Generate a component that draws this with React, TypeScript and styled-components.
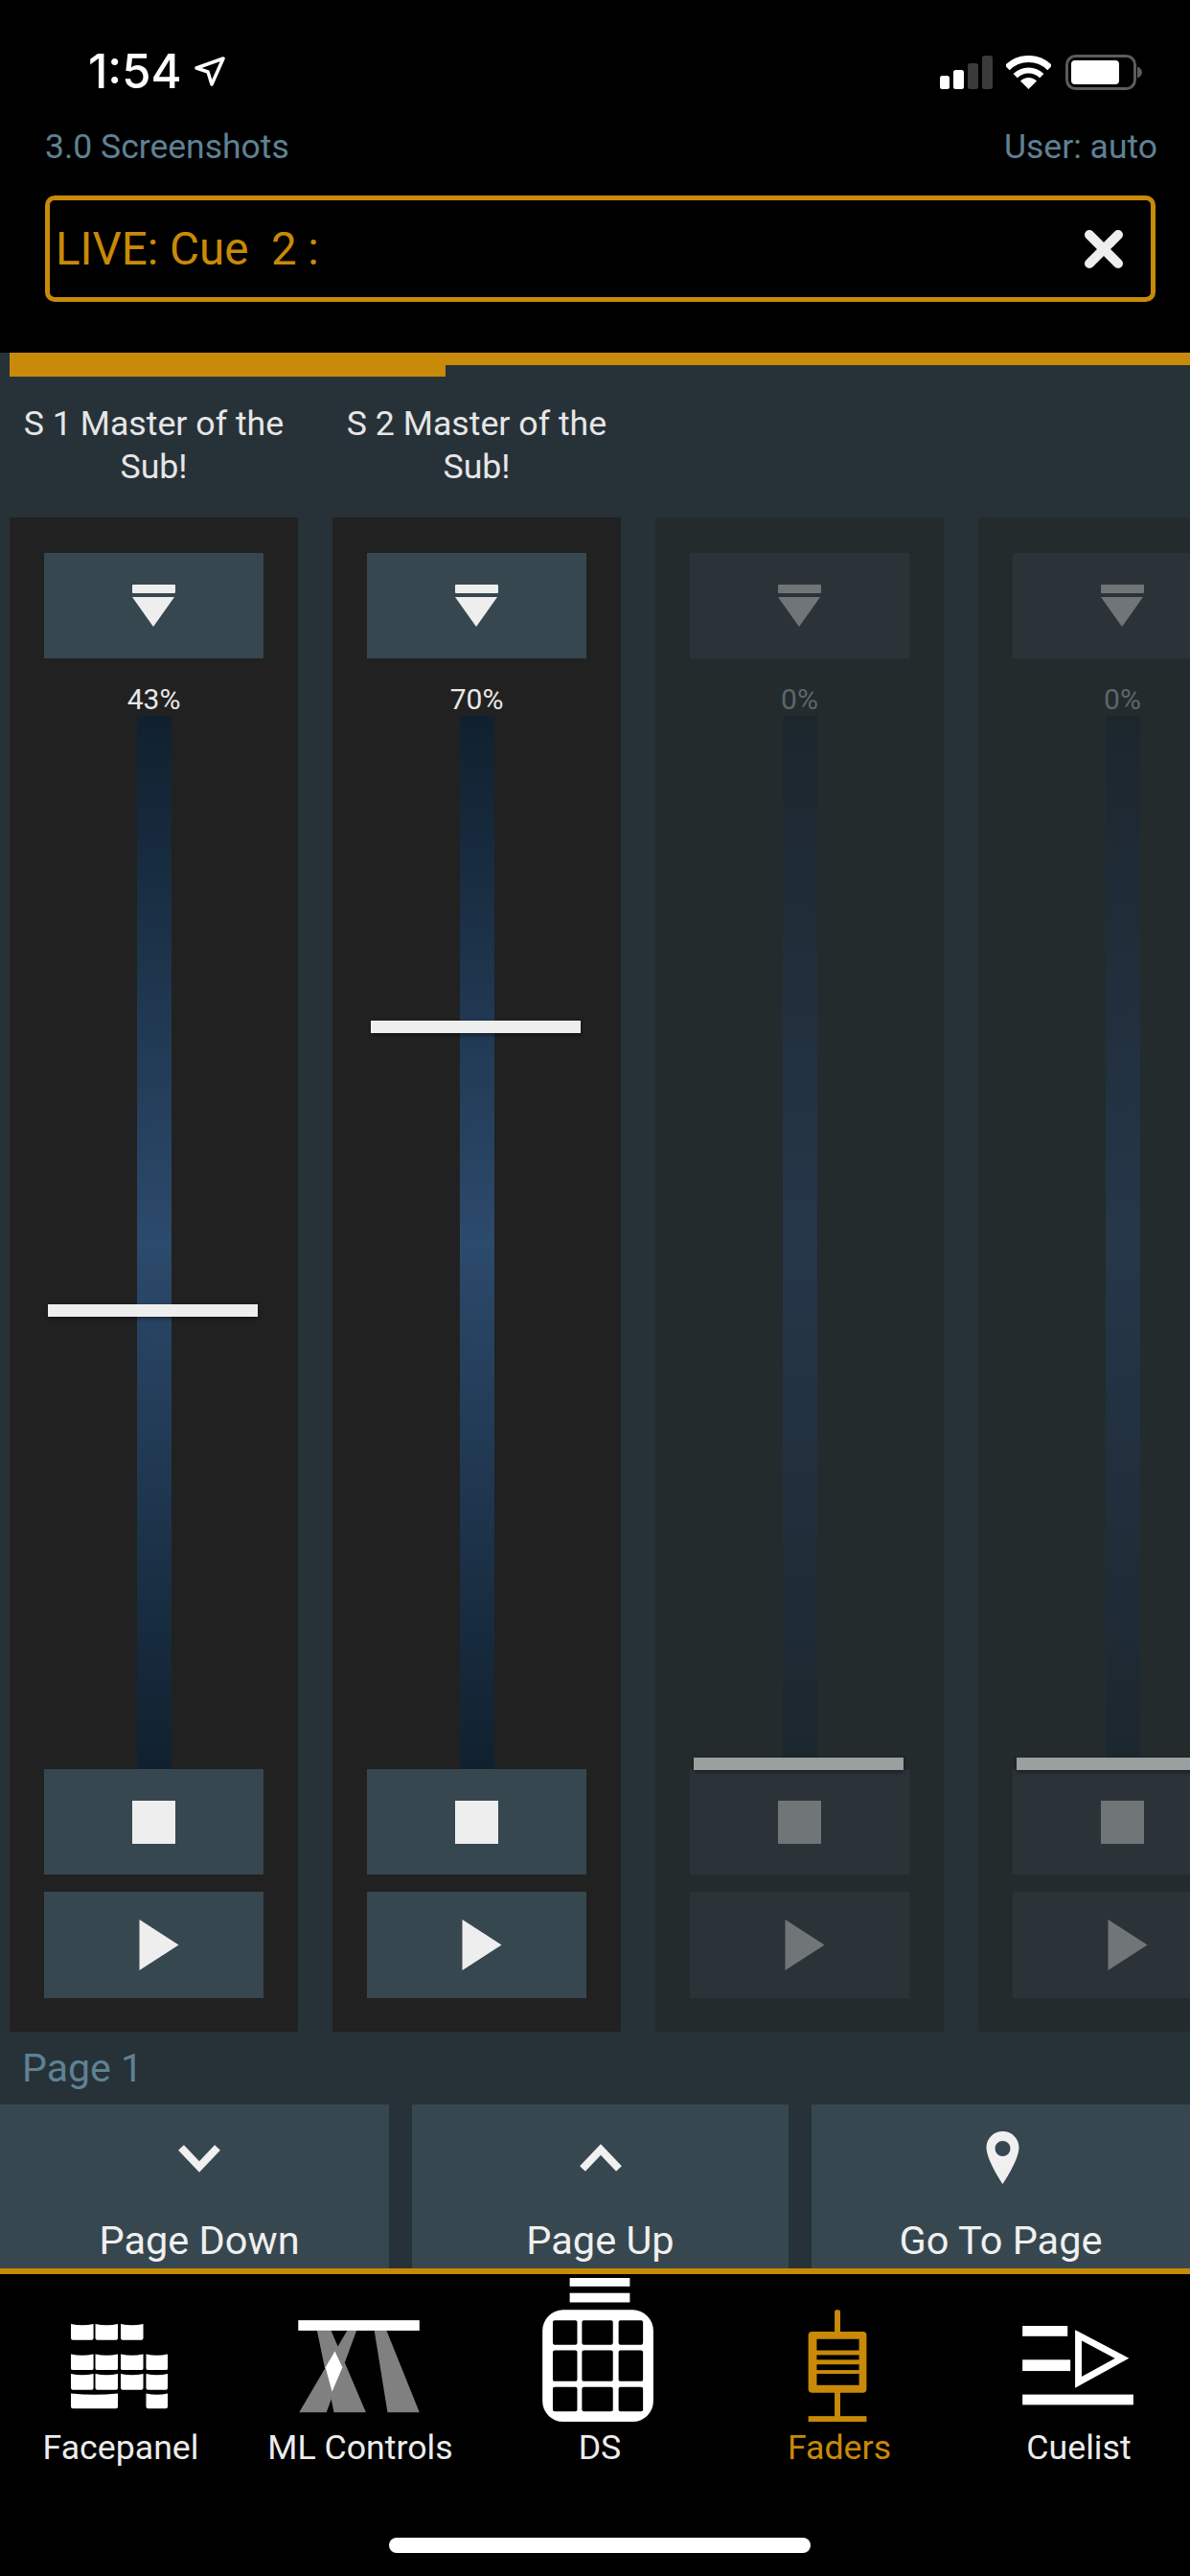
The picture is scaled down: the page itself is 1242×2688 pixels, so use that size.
import React from 'react';
import styled, { createGlobalStyle } from 'styled-components';

const ORANGE = '#c88a08';
const Global = createGlobalStyle`
  html, body { margin: 0; padding: 0; background: #000; }
  body { font-family: Roboto, "Liberation Sans", sans-serif; }
`;
const Page = styled.div`
  width: 1242px; height: 2688px; background: #000; overflow: hidden;
  display: flex; flex-direction: column;
`;
const StatusBar = styled.div`
  height: 50px; padding: 50px 50px 32px 92px; display: flex; align-items: center;
`;
const Time = styled.span`
  font-family: Inter, Roboto, sans-serif; font-weight: 500; font-size: 49px; color: #fff; line-height: 50px;
`;
const Arrow = styled.svg` margin-left: 13px; `;
const Spacer = styled.div` flex: 1; `;
const StatusIcons = styled.div` display: flex; align-items: center; gap: 14px; `;
const HeaderRow = styled.div`
  padding: 0 34px 0 47px; display: flex; justify-content: space-between;
  font-size: 35.5px; line-height: 42px; color: #5f8194;
`;
const CueBox = styled.div`
  margin: 30px 36px 53px 47px; height: 101px; border: 5px solid ${ORANGE}; border-radius: 10px;
  display: flex; align-items: center; justify-content: space-between; padding: 0 28px 0 6px;
`;
const CueText = styled.span` font-size: 47.5px; color: ${ORANGE}; white-space: pre; `;
const Panel = styled.div` flex: 1; background: #263238; display: flex; flex-direction: column; min-height: 0; `;
const ProgressTrack = styled.div` margin-left: 10px; height: 13px; background: ${ORANGE}; flex-shrink: 0; `;
const ProgressFill = styled.div` width: 455px; height: 25px; background: ${ORANGE}; `;
const Strip = styled.div`
  display: flex; gap: 36px; padding: 39px 0 0 10px; flex-shrink: 0;
`;
const Channel = styled.div` width: 301px; flex-shrink: 0; display: flex; flex-direction: column; `;
const ChannelName = styled.div`
  height: 120px; text-align: center; font-size: 35.7px; line-height: 45px; color: #e6e6e6; white-space: pre-line;
`;
const Fader = styled.div<{ $dim?: boolean }>`
  position: relative; height: 1580px; box-sizing: border-box; padding: 37px 36px 35px;
  background: ${p => (p.$dim ? '#232b2d' : '#212121')};
  display: flex; flex-direction: column;
  color: ${p => (p.$dim ? '#707678' : '#eeeeee')};
`;
const FaderButton = styled.div<{ $dim?: boolean; $h?: number }>`
  height: ${p => p.$h ?? 110}px; flex-shrink: 0; background: ${p => (p.$dim ? '#2b3339' : '#37474f')};
  display: flex; align-items: center; justify-content: center;
`;
const Percent = styled.div<{ $dim?: boolean }>`
  height: 34px; padding-top: 26px; text-align: center; font-size: 30px; line-height: 34px; flex-shrink: 0;
  color: ${p => (p.$dim ? '#5e666a' : '#e8e8e8')};
`;
const Track = styled.div<{ $dim?: boolean }>`
  flex: 1; width: 36px; align-self: center;
  background: ${p => p.$dim
    ? 'linear-gradient(to bottom, #1c262d 0%, #26374a 50%, #1c262d 100%)'
    : 'linear-gradient(to bottom, #10202e 0%, #2c4a6c 50%, #10202e 100%)'};
`;
const Handle = styled.div<{ $dim?: boolean }>`
  position: absolute; left: 40px; width: 219px; height: 13px;
  background: ${p => (p.$dim ? '#9b9fa0' : '#eeeeee')};
  box-shadow: 0 2px 4px rgba(0,0,0,.45);
`;
const ButtonGap = styled.div` height: 18px; flex-shrink: 0; `;
const PageLabel = styled.div`
  height: 76px; box-sizing: border-box; padding: 16px 0 0 23px; font-size: 41px; line-height: 44px; color: #5f8194; flex-shrink: 0;
`;
const ActionRow = styled.div`
  display: grid; grid-template-columns: 406px 393px 1fr; column-gap: 24px; height: 171px; flex-shrink: 0;
`;
const ActionButton = styled.div<{ $shift?: number }>`
  background: #37474f; color: #f0f0f0; display: flex; flex-direction: column; align-items: center;
  padding-left: ${p => p.$shift ?? 0}px;
`;
const ActionIcon = styled.svg` margin-top: 24px; height: 64px; `;
const ActionText = styled.div` margin-top: 29px; font-size: 41.5px; line-height: 49px; `;
const Rule = styled.div` height: 6px; background: ${ORANGE}; flex-shrink: 0; `;
const Nav = styled.div`
  height: 315px; box-sizing: border-box; background: #000; padding: 4px 0 0 1px;
  display: grid; grid-template-columns: repeat(5, 250px); grid-template-rows: 198px; flex-shrink: 0; position: relative;
`;
const NavItem = styled.div<{ $active?: boolean }>`
  display: flex; flex-direction: column; align-items: center; color: ${p => (p.$active ? ORANGE : '#ececec')};
`;
const NavLabel = styled.div` margin-top: 5px; font-size: 35.7px; line-height: 41px; `;
const HomeBar = styled.div` position: absolute; left: 406px; top: 275px; width: 440px; height: 16px; border-radius: 8px; background: #fff; `;

const icon = (x: number, children: React.ReactNode) => (
  <svg width="160" height="155" viewBox={`${x} 2377 160 155`} style={{ display: 'block' }}>{children}</svg>
);

const KeyCap = ({ x, y, w, h }: { x: number; y: number; w: number; h: number }) => (
  <path d={`M${x} ${y + 1}Q${x + w / 2} ${y + 3.5} ${x + w} ${y + 1}V${y + h - 2}Q${x + w} ${y + h} ${x + w - 2} ${y + h}H${x + 2}Q${x} ${y + h} ${x} ${y + h - 2}Z`} />
);

const fpRows = [2425, 2457, 2478];
const fpCols: [number, number][] = [[73, 24], [99, 24], [126, 24], [153, 23]];

const FacepanelIcon = () => icon(46, <g fill="#fff">
  {fpRows.map((y, r) => fpCols.slice(0, r === 0 ? 3 : 4).map(([x, w]) => <KeyCap key={`${y}-${x}`} x={x} y={y} w={w} h={18} />))}
  <KeyCap x={73} y={2499} w={50} h={17} />
  <KeyCap x={153} y={2499} w={23} h={17} />
</g>);

const MLIcon = () => icon(296, <>
  <g fill="#808080">
    <polygon points="330,2433 345,2433 382,2520 348,2520" />
    <polygon points="362,2433 372,2433 340,2520 311,2520" />
    <polygon points="391,2433 404,2433 439,2520 405,2520" />
  </g>
  <polygon points="349,2455 357,2472 346,2498 339,2472" fill="#fff" />
  <rect x="310" y="2422" width="129" height="11" fill="#fff" />
</>);

const dsCols: [number, number][] = [[577, 26], [608, 33], [647, 26]];
const dsRows: [number, number][] = [[2422, 26], [2454, 33], [2493, 26]];
const DSIcon = () => icon(547, <>
  <rect x="595" y="2377" width="64" height="9" fill="#fff" />
  <rect x="595" y="2393" width="64" height="10" fill="#fff" />
  <rect x="566" y="2411" width="118" height="119" rx="22" fill="#fff" />
  {dsRows.map(([y, h]) => dsCols.map(([x, w]) => <rect key={`${x}-${y}`} x={x} y={y} width={w} height={h} rx="2" fill="#000" />))}
</>);

const FadersIcon = () => icon(796, <g fill={ORANGE}>
  <rect x="871" y="2411" width="6" height="114" rx="2" />
  <rect x="843" y="2434" width="62" height="65" rx="4" />
  <rect x="843" y="2524" width="62" height="6" />
  <g fill="#000">
    <rect x="852" y="2442" width="45" height="12" />
    <rect x="852" y="2459" width="45" height="5" />
    <rect x="852" y="2469" width="45" height="6" />
    <rect x="852" y="2479" width="45" height="12" />
  </g>
</g>);

const CuelistIcon = () => icon(1046, <>
  <g fill="#fff">
    <rect x="1066" y="2428" width="48" height="11" />
    <rect x="1066" y="2464" width="51" height="12" />
    <rect x="1066" y="2501" width="118" height="11" />
  </g>
  <polygon points="1125.5,2438 1172,2462.5 1125.5,2488" fill="none" stroke="#fff" strokeWidth="7" strokeLinejoin="miter" />
</>);

const FadeIcon = () => (
  <svg width="45" height="44" viewBox="0 0 45 44" fill="currentColor">
    <rect x="0" y="0" width="45" height="9" rx="1" />
    <polygon points="0,13 44,13 22,44" />
  </svg>
);
const StopIcon = () => (
  <svg width="45" height="45" viewBox="0 0 45 45" fill="currentColor"><rect width="45" height="45" /></svg>
);
const PlayIcon = () => (
  <svg width="60" height="53" viewBox="0 0 60 53" fill="currentColor"><polygon points="14.5,0 55.5,26.5 14.5,53" /></svg>
);

const faders = [
  { id: 1, name: 'S 1 Master of the\nSub!', value: 43 },
  { id: 2, name: 'S 2 Master of the\nSub!', value: 70 },
  { id: 3, name: '', value: 0 },
  { id: 4, name: '', value: 0 },
];

export default function App() {
  return (
    <Page>
      <Global />
      <StatusBar>
        <Time>1:54</Time>
        <Arrow width="32" height="32" viewBox="0 0 32 32">
          <polygon points="30,2 2,12 14,16 18,29" fill="none" stroke="#fff" strokeWidth="3.5" strokeLinejoin="round" />
        </Arrow>
        <Spacer />
        <StatusIcons>
          <svg width="55" height="35" viewBox="0 0 55 35">
            <rect x="0" y="21" width="10" height="14" rx="2.5" fill="#fff" />
            <rect x="14" y="15" width="11" height="20" rx="2.5" fill="#fff" />
            <rect x="29" y="8" width="11" height="27" rx="2.5" fill="#3a3a3a" />
            <rect x="44" y="0" width="11" height="35" rx="2.5" fill="#3a3a3a" />
          </svg>
          <svg width="47" height="35" viewBox="0 0 47 35">
            <path d="M1.2 12.7A31.5 31.5 0 0 1 45.8 12.7" fill="none" stroke="#fff" strokeWidth="7" />
            <path d="M9.7 21.2A19.5 19.5 0 0 1 37.3 21.2" fill="none" stroke="#fff" strokeWidth="6" />
            <path d="M23.5 35L15 26.5A12 12 0 0 1 32 26.5Z" fill="#fff" />
          </svg>
          <svg width="80" height="37" viewBox="0 0 80 37" style={{ marginLeft: 1 }}>
            <rect x="1.5" y="1.5" width="71" height="34" rx="9" fill="none" stroke="#5c5c5c" strokeWidth="3" />
            <rect x="6" y="6" width="50" height="25" rx="4" fill="#fff" />
            <path d="M75 12.5C78 13.5 80 16 80 18.5S78 23.5 75 24.5Z" fill="#5c5c5c" />
          </svg>
        </StatusIcons>
      </StatusBar>
      <HeaderRow>
        <span>3.0 Screenshots</span>
        <span>User: auto</span>
      </HeaderRow>
      <CueBox>
        <CueText>LIVE: Cue  2 :</CueText>
        <svg width="42" height="42" viewBox="0 0 42 42">
          <path d="M6 6L36 36M36 6L6 36" stroke="#eeeeee" strokeWidth="10" strokeLinecap="round" fill="none" />
        </svg>
      </CueBox>
      <Panel>
        <ProgressTrack><ProgressFill /></ProgressTrack>
        <Strip>
          {faders.map(f => {
            const dim = f.value === 0;
            return (
              <Channel key={f.id}>
                <ChannelName>{f.name}</ChannelName>
                <Fader $dim={dim}>
                  <FaderButton $dim={dim}><FadeIcon /></FaderButton>
                  <Percent $dim={dim}>{f.value}%</Percent>
                  <Track $dim={dim} />
                  <FaderButton $dim={dim}><StopIcon /></FaderButton>
                  <ButtonGap />
                  <FaderButton $dim={dim} $h={111}><PlayIcon /></FaderButton>
                  <Handle $dim={dim} style={{ bottom: 273 + f.value * 10.99 }} />
                </Fader>
              </Channel>
            );
          })}
        </Strip>
        <PageLabel>Page 1</PageLabel>
        <ActionRow>
          <ActionButton $shift={10}>
            <ActionIcon width="48" viewBox="0 0 48 64"><polyline points="5,21 24,41 43,21" fill="none" stroke="#f0f0f0" strokeWidth="8" /></ActionIcon>
            <ActionText>Page Down</ActionText>
          </ActionButton>
          <ActionButton>
            <ActionIcon width="48" viewBox="0 0 48 64"><polyline points="5,43 24,23 43,43" fill="none" stroke="#f0f0f0" strokeWidth="8" /></ActionIcon>
            <ActionText>Page Up</ActionText>
          </ActionButton>
          <ActionButton>
            <ActionIcon width="40" viewBox="0 0 40 64"><path fillRule="evenodd" d="M21.5 4C12 4 4.5 11.5 4.5 21C4.5 34 21.5 59 21.5 59S38.5 34 38.5 21C38.5 11.5 31 4 21.5 4ZM21.5 14A8 8 0 1 1 21.5 30A8 8 0 1 1 21.5 14Z" fill="#f0f0f0" /></ActionIcon>
            <ActionText>Go To Page</ActionText>
          </ActionButton>
        </ActionRow>
        <Rule />
        <Nav>
          <NavItem><FacepanelIcon /><NavLabel>Facepanel</NavLabel></NavItem>
          <NavItem><MLIcon /><NavLabel>ML Controls</NavLabel></NavItem>
          <NavItem><DSIcon /><NavLabel>DS</NavLabel></NavItem>
          <NavItem $active><FadersIcon /><NavLabel>Faders</NavLabel></NavItem>
          <NavItem><CuelistIcon /><NavLabel>Cuelist</NavLabel></NavItem>
          <HomeBar />
        </Nav>
      </Panel>
    </Page>
  );
}
